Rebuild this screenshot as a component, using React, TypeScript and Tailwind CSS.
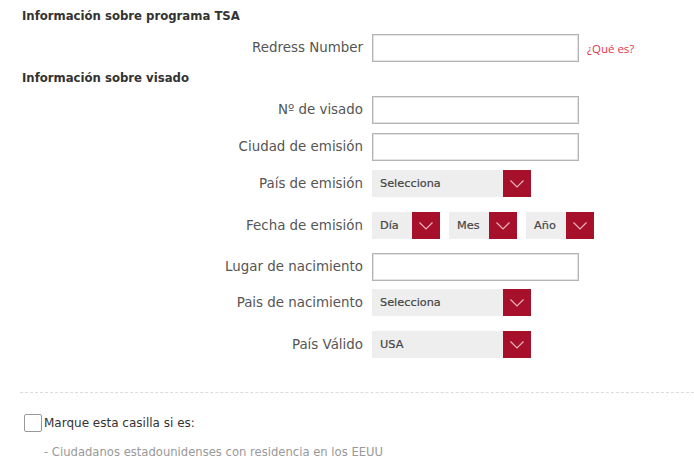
import React from 'react';

const labelCls = "w-[372px] pr-[9px] text-right text-[13.4px] text-[#555] font-['DejaVu_Sans',sans-serif] leading-none";

const Chevron = () => (
  <svg width="28" height="27" viewBox="0 0 28 27" className="block">
    <path d="M7.5 10.5 L14 17 L20.5 10.5" fill="none" stroke="#eeb3bc" strokeWidth="1.2" />
  </svg>
);

const Select: React.FC<{ value: string; w: string }> = ({ value, w }) => (
  <div className={`${w} h-[27px] flex bg-[#eeeeee]`}>
    <span className="flex-1 flex items-center pl-[8px] pt-[2px] text-[11.3px] text-[#444] font-['DejaVu_Sans',sans-serif] [-webkit-text-stroke:0.2px_#444]">
      {value}
    </span>
    <div className="w-[28px] h-[27px] bg-[#a6102a]">
      <Chevron />
    </div>
  </div>
);

const TextInput = () => (
  <div className="w-[207px] h-[28px] border border-[#b4b4b4] bg-white shadow-[inset_0_0_0_1px_#e2e2e2]" />
);

const Row: React.FC<{ label: string; mt: string; children: React.ReactNode }> = ({ label, mt, children }) => (
  <div className={`flex items-center ${mt}`}>
    <div className={labelCls}>{label}</div>
    {children}
  </div>
);

const Heading: React.FC<{ children: React.ReactNode; mt: string }> = ({ children, mt }) => (
  <div className={`${mt} pl-[22px] text-[11.7px] font-bold text-[#333] font-['DejaVu_Sans',sans-serif] leading-[14px]`}>
    {children}
  </div>
);

export default function App() {
  return (
    <div className="w-[694px] h-[464px] overflow-hidden bg-white">
      <Heading mt="mt-[9px]">Información sobre programa TSA</Heading>

      <Row label="Redress Number" mt="mt-[11px]">
        <TextInput />
        <span className="ml-[8px] mt-[1px] text-[11.5px] text-[#e6334a] font-['Open_Sans',sans-serif]">¿Qué es?</span>
      </Row>

      <Heading mt="mt-[9px]">Información sobre visado</Heading>

      <Row label="Nº de visado" mt="mt-[11px]"><TextInput /></Row>
      <Row label="Ciudad de emisión" mt="mt-[9px]"><TextInput /></Row>
      <Row label="País de emisión" mt="mt-[9px]"><Select value="Selecciona" w="w-[159px]" /></Row>
      <Row label="Fecha de emisión" mt="mt-[15px]">
        <div className="flex gap-[9px]">
          <Select value="Día" w="w-[68px]" />
          <Select value="Mes" w="w-[68px]" />
          <Select value="Año" w="w-[68px]" />
        </div>
      </Row>
      <Row label="Lugar de nacimiento" mt="mt-[14px]"><TextInput /></Row>
      <Row label="Pais de nacimiento" mt="mt-[8px]"><Select value="Selecciona" w="w-[159px]" /></Row>
      <Row label="País Válido" mt="mt-[15px]"><Select value="USA" w="w-[159px]" /></Row>

      <div className="ml-[20px] mt-[34px] border-t border-dashed border-[#dcdcdc]" />

      <div className="mt-[21px] pl-[24px] flex items-center">
        <div className="w-[18px] h-[18px] border border-[#999] rounded-[2px] bg-white" />
        <span className="ml-[2px] text-[12px] text-[#333] font-['DejaVu_Sans',sans-serif]">Marque esta casilla si es:</span>
      </div>

      <div className="mt-[11px] pl-[44px] text-[11.6px] leading-[18px] text-[#999] font-['DejaVu_Sans',sans-serif]">
        <div>- Ciudadanos estadounidenses con residencia en los EEUU</div>
        <div>- Residentes legales de EEUU</div>
      </div>
    </div>
  );
}
